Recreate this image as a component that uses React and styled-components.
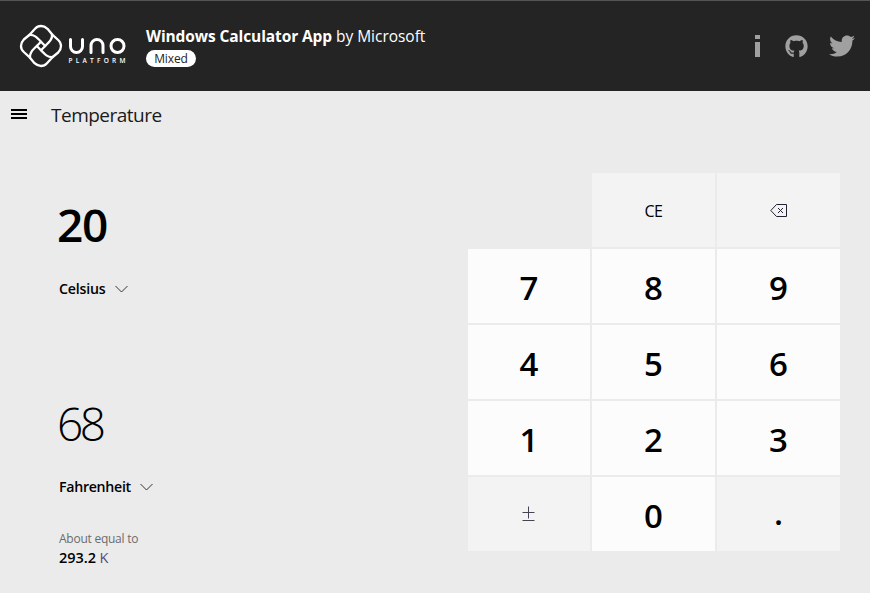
import React from "react";
import styled, { createGlobalStyle } from "styled-components";
import { FaGithub, FaTwitter } from "react-icons/fa";

const Global = createGlobalStyle`
  * { box-sizing: border-box; }
  body { margin: 0; background: #ebebeb; overflow: hidden; font-family: "Open Sans", "Noto Sans", sans-serif; }
  button { font: inherit; border: 0; padding: 0; margin: 0; background: none; color: inherit; }
`;
const Page = styled.div`
  width: 870px; height: 593px; background: #ebebeb; color: #000;
`;
const Header = styled.header`
  display: flex; height: 91px; background: #242424; color: #fff;
  border-top: 1px solid #555; padding: 0 15px 0 16px;
`;
const Logo = styled.svg`width: 114px; height: 54px; margin-top: 18px; flex: none;`;
const Titles = styled.div`padding: 24px 0 0 16px; flex: 1;`;
const Title = styled.h1`
  margin: 0; font-size: 15.5px; line-height: 22px; font-weight: 400; white-space: nowrap;
  letter-spacing: -0.03px;
  b { font-weight: 700; letter-spacing: -0.1px; }
`;
const Badge = styled.span`
  display: flex; align-items: center; justify-content: center; width: 50px; height: 17px; margin-top: 3px;
  border-radius: 9px; background: #fff; color: #242424; font-size: 12px; line-height: 17px; letter-spacing: -0.1px;
`;
const Links = styled.nav`display: flex; align-items: center; color: #a0a0a0;`;
const InfoIcon = styled.svg`width: 7px; height: 22px; margin: 0 24px 1px 0;`;
const GithubIcon = styled(FaGithub)`width: 23px; height: 23px; margin-right: 21px;`;
const TwitterIcon = styled(FaTwitter)`width: 26px; height: 26px;`;
const NavBar = styled.div`display: flex; height: 48px; align-items: center; padding-left: 11px;`;
const MenuButton = styled.button`
  display: grid; gap: 2px; width: 16px; margin-right: 24px; margin-top: -2px;
`;
const MenuLine = styled.span`height: 2px; background: #000;`;
const Mode = styled.h2`
  margin: 0; font-size: 19px; line-height: 26px; font-weight: 400; color: #1a1a1a; letter-spacing: -0.5px;
`;
const Body = styled.main`display: flex; padding-right: 30px;`;
const Converter = styled.section`width: 468px; padding: 55px 0 0 57px;`;
const Value = styled.div`
  height: 60px; line-height: 60px; font-size: 46px; letter-spacing: ${(p) => (p.$active ? "-1.2px" : "-3.4px")};
  font-weight: ${(p) => (p.$active ? 600 : 300)};
`;
const Unit = styled.button`
  display: flex; align-items: center; gap: 9px; height: 20px; margin: 25px 0 94px 2px;
  font-size: 14.2px; line-height: 20px; font-weight: 600; letter-spacing: -0.2px;
`;
const TargetUnit = styled(Unit)`margin-top: 24px; margin-bottom: 33px; letter-spacing: -0.3px;`;
const Chevron = styled.svg`width: 14px; height: 8px;`;
const Caption = styled.div`
  margin-left: 2px; font-size: 12px; line-height: 18px; color: #6c6c6c; letter-spacing: -0.25px;
`;
const Equal = styled.div`
  margin-left: 2px; font-size: 14.5px; line-height: 20px; font-weight: 600; letter-spacing: -0.05px;
  span { font-weight: 400; color: #5c4a72; }
`;
const Keypad = styled.section`
  display: grid; grid-template-columns: 122px 123px 123px; grid-auto-rows: 74px; gap: 2px; padding-top: 34px;
`;
const Key = styled.button`
  display: flex; align-items: center; justify-content: center; padding-top: ${(p) => (p.$small ? "2px" : "3px")};
  background: ${(p) => (p.$muted ? "#f3f3f3" : "#fcfcfc")};
  font-size: ${(p) => (p.$small ? "16px" : "33px")};
  font-weight: ${(p) => (p.$small ? 400 : 600)};
  letter-spacing: ${(p) => (p.$small ? "-0.6px" : "0")};
`;
const PointKey = styled(Key)`padding-top: 0; padding-bottom: 3px;`;
const SignKey = styled(Key)`padding: 0 2px 0 0;`;
const Spacer = styled.span``;

const Mark = () => (
  <Logo viewBox="16 19 114 54" fill="none" stroke="#fff" strokeWidth="2.3" strokeLinejoin="round" strokeLinecap="round">
    <g transform="translate(41 46)">
      {[0, 90, 180, 270].map((a) => (
        <path
          key={a}
          transform={`rotate(${a})`}
          d="M-11.7 -11L-6 -17.2Q-3.5 -20 0 -20Q3.5 -20 6.5 -17.2L11 -11.7M-11.7 -11C-7 -11.5 -4.5 -9 0 -4.2L4.2 0"
        />
      ))}
    </g>
    <g strokeWidth="3">
      <path d="M70.5 39.5V46.5A6 6 0 0 0 82.5 46.5V39.5M91 52.5V45.5A6 6 0 0 1 103 45.5V52.5" />
      <circle cx="117.5" cy="46" r="6.5" />
    </g>
    <text x="68.5" y="63" fill="#fff" stroke="none" fontFamily="Open Sans, sans-serif" fontSize="6.5" fontWeight="600" textLength="57" lengthAdjust="spacing">PLATFORM</text>
  </Logo>
);
const Down = () => (
  <Chevron viewBox="0 0 14 8" fill="none" stroke="#333" strokeWidth="1"><path d="M.5 1l6 6 6-6" /></Chevron>
);
const Backspace = () => (
  <svg width="18" height="14" viewBox="0 0 18 14" fill="none" stroke="#222235"><path d="M6.5 .5H16.5V12.5H6.5L.8 6.5ZM8 4l5 5M13 4L8 9" /></svg>
);
const PlusMinus = () => (
  <svg width="13" height="16" viewBox="0 0 13 16" fill="none" stroke="#444455"><path d="M.5 6.5H12.5M6.5 .5V12.5M.5 14.5H12.5" /></svg>
);

export default function App() {
  return (
    <Page>
      <Global />
      <Header>
        <Mark />
        <Titles>
          <Title><b>Windows Calculator App</b> by Microsoft</Title>
          <Badge>Mixed</Badge>
        </Titles>
        <Links>
          <InfoIcon viewBox="0 0 7 22" fill="currentColor"><path d="M1 0H6V4H1ZM1 7H6V22H1Z" /></InfoIcon>
          <GithubIcon />
          <TwitterIcon />
        </Links>
      </Header>
      <NavBar>
        <MenuButton aria-label="Menu"><MenuLine /><MenuLine /><MenuLine /></MenuButton>
        <Mode>Temperature</Mode>
      </NavBar>
      <Body>
        <Converter>
          <Value $active>20</Value>
          <Unit>Celsius<Down /></Unit>
          <Value>68</Value>
          <TargetUnit>Fahrenheit<Down /></TargetUnit>
          <Caption>About equal to</Caption>
          <Equal>293.2 <span>K</span></Equal>
        </Converter>
        <Keypad>
          <Spacer />
          <Key $muted $small>CE</Key>
          <Key $muted $small aria-label="Backspace"><Backspace /></Key>
          {["7", "8", "9", "4", "5", "6", "1", "2", "3"].map((n) => <Key key={n}>{n}</Key>)}
          <SignKey $muted aria-label="Plus minus"><PlusMinus /></SignKey>
          <Key>0</Key>
          <PointKey $muted>.</PointKey>
        </Keypad>
      </Body>
    </Page>
  );
}
